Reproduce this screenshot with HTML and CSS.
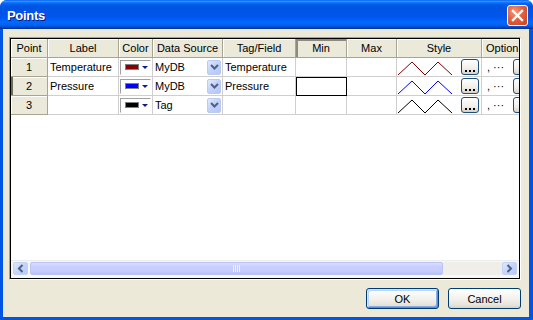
FILE: index.html
```html
<!DOCTYPE html>
<html>

<head>
    <meta charset="utf-8">
    <title>Points</title>
    <link rel="stylesheet" href="styles.css">
</head>

<body>
    <div class="window">
        <div class="titlebar">
            <span class="title">Points</span>
            <span class="close">
                <svg width="19" height="19" viewBox="0 0 19 19">
                    <path d="M5 5 L14 14 M14 5 L5 14" stroke="#fff" stroke-width="2.4" stroke-linecap="square" />
                </svg>
            </span>
        </div>

        <div class="client">
            <div class="grid-frame">
                <div class="grid-inner">
                    <div class="grid-view">
                        <div class="grid">
                            <!-- header row -->
                            <div class="hd">Point</div>
                            <div class="hd">Label</div>
                            <div class="hd">Color</div>
                            <div class="hd">Data Source</div>
                            <div class="hd">Tag/Field</div>
                            <div class="hd pressed">Min</div>
                            <div class="hd">Max</div>
                            <div class="hd">Style</div>
                            <div class="hd left">Option</div>

                            <!-- row 1 -->
                            <div class="hd">1</div>
                            <div class="cell">Temperature</div>
                            <div class="cell c-color">
                                <span class="swatch-box"><span class="swatch sw-red"></span><svg width="6" height="3" viewBox="0 0 6 3"><path d="M0 0 H6 L3 3 Z" fill="#0a1f8c" /></svg></span>
                            </div>
                            <div class="cell">MyDB<span class="combo-btn"><svg width="9" height="6" viewBox="0 0 9 6"><path d="M1 1 L4.5 4.5 L8 1" stroke="#4d6185" stroke-width="2" fill="none" /></svg></span></div>
                            <div class="cell">Temperature</div>
                            <div class="cell"></div>
                            <div class="cell"></div>
                            <div class="cell c-style">
                                <svg width="56" height="19" viewBox="0 0 56 19"><polyline points="0,17 14,4 27,17 40,4 54,17" fill="none" stroke="#800000" stroke-width="1" /></svg>
                                <span class="dots-btn"><svg width="10" height="2" viewBox="0 0 10 2"><path d="M0 0h2v2h-2z M4 0h2v2h-2z M8 0h2v2h-2z" fill="#000" /></svg></span>
                            </div>
                            <div class="cell c-opt">, ···<span class="dots-btn"></span></div>

                            <!-- row 2 -->
                            <div class="hd pressed-row">2</div>
                            <div class="cell">Pressure</div>
                            <div class="cell c-color">
                                <span class="swatch-box"><span class="swatch sw-blue"></span><svg width="6" height="3" viewBox="0 0 6 3"><path d="M0 0 H6 L3 3 Z" fill="#0a1f8c" /></svg></span>
                            </div>
                            <div class="cell">MyDB<span class="combo-btn"><svg width="9" height="6" viewBox="0 0 9 6"><path d="M1 1 L4.5 4.5 L8 1" stroke="#4d6185" stroke-width="2" fill="none" /></svg></span></div>
                            <div class="cell">Pressure</div>
                            <div class="cell focus"></div>
                            <div class="cell"></div>
                            <div class="cell c-style">
                                <svg width="56" height="19" viewBox="0 0 56 19"><polyline points="0,17 14,4 27,17 40,4 54,17" fill="none" stroke="#0000ff" stroke-width="1" /></svg>
                                <span class="dots-btn"><svg width="10" height="2" viewBox="0 0 10 2"><path d="M0 0h2v2h-2z M4 0h2v2h-2z M8 0h2v2h-2z" fill="#000" /></svg></span>
                            </div>
                            <div class="cell c-opt">, ···<span class="dots-btn"></span></div>

                            <!-- row 3 -->
                            <div class="hd">3</div>
                            <div class="cell"></div>
                            <div class="cell c-color">
                                <span class="swatch-box"><span class="swatch sw-black"></span><svg width="6" height="3" viewBox="0 0 6 3"><path d="M0 0 H6 L3 3 Z" fill="#0a1f8c" /></svg></span>
                            </div>
                            <div class="cell">Tag<span class="combo-btn"><svg width="9" height="6" viewBox="0 0 9 6"><path d="M1 1 L4.5 4.5 L8 1" stroke="#4d6185" stroke-width="2" fill="none" /></svg></span></div>
                            <div class="cell"></div>
                            <div class="cell"></div>
                            <div class="cell"></div>
                            <div class="cell c-style">
                                <svg width="56" height="19" viewBox="0 0 56 19"><polyline points="0,17 14,4 27,17 40,4 54,17" fill="none" stroke="#000" stroke-width="1" /></svg>
                                <span class="dots-btn"><svg width="10" height="2" viewBox="0 0 10 2"><path d="M0 0h2v2h-2z M4 0h2v2h-2z M8 0h2v2h-2z" fill="#000" /></svg></span>
                            </div>
                            <div class="cell c-opt">, ···<span class="dots-btn"></span></div>
                        </div>
                    </div>

                    <div class="hscroll">
                        <span class="sb-btn"><svg width="7" height="9" viewBox="0 0 7 9"><path d="M5.5 1 L2 4.5 L5.5 8" stroke="#4d6185" stroke-width="2" fill="none" /></svg></span>
                        <span class="sb-thumb"><span class="grip"></span></span>
                        <span class="sb-track"></span>
                        <span class="sb-btn"><svg width="7" height="9" viewBox="0 0 7 9"><path d="M1.5 1 L5 4.5 L1.5 8" stroke="#4d6185" stroke-width="2" fill="none" /></svg></span>
                    </div>
                </div>
            </div>

            <div class="actions">
                <button class="btn default">OK</button>
                <button class="btn">Cancel</button>
            </div>
        </div>
    </div>
</body>

</html>
```

FILE: styles.css
```css
* {
    box-sizing: border-box;
}

body {
    margin: 0;
    background: #fff;
    font-family: "Liberation Sans", Arial, sans-serif;
    font-size: 11px;
    color: #000;
}

.window {
    width: 533px;
    height: 320px;
    display: flex;
    flex-direction: column;
    background: #0055e5;
    border-radius: 7px 7px 0 0;
    overflow: hidden;
}

.titlebar {
    height: 29px;
    flex: none;
    display: flex;
    align-items: center;
    justify-content: space-between;
    padding: 2px 5px 0 7px;
    background: linear-gradient(to bottom, #0058ee 0%, #3593ff 4%, #288eff 6%, #127dff 8%, #036ffc 10%, #0262ee 14%, #0057e5 20%, #0054e3 24%, #0055eb 56%, #005bf5 66%, #026afe 76%, #0062ef 86%, #0052d6 92%, #0040ab 96%, #003092 100%);
}

.title {
    color: #fff;
    font-weight: bold;
    font-size: 13px;
    letter-spacing: -0.3px;
    text-shadow: 1px 1px #0a1883;
}

.close {
    width: 21px;
    height: 21px;
    border: 1px solid #fff;
    border-radius: 3px;
    display: flex;
    align-items: center;
    justify-content: center;
    background: radial-gradient(circle at 35% 30%, #f29a7d 0%, #e2613f 45%, #c7401f 100%);
}

.client {
    flex: 1;
    margin: 0 4px 3px 3px;
    background: #ece9d8;
    padding: 8px 8px 8px 6px;
    display: flex;
    flex-direction: column;
}

.grid-frame {
    height: 243px;
    border: 1px solid;
    border-color: #a0a0a0 #fff #fff #a0a0a0;
}

.grid-inner {
    height: 100%;
    border: 1px solid #000;
    background: #fff;
    display: flex;
    flex-direction: column;
}

.grid-view {
    flex: 1;
    overflow: hidden;
}

.grid {
    display: grid;
    grid-template-columns: 37px 71px 34px 70px 73px 51px 50px 85px 60px;
    grid-auto-rows: 19px;
    width: max-content;
}

.hd {
    background: #ebe9d9;
    border-right: 1px solid #a7a492;
    border-bottom: 1px solid #a7a492;
    box-shadow: inset 1px 1px #fff;
    display: flex;
    align-items: center;
    justify-content: center;
    white-space: nowrap;
    overflow: hidden;
}

.hd.left {
    justify-content: flex-start;
    padding-left: 4px;
}

.hd.pressed {
    box-shadow: inset 2px 2px #8e8b7c;
}

.hd.pressed-row {
    box-shadow: inset 2px 0 #6f6c5f, inset 1px 1px #fff;
}

.cell {
    border-right: 1px solid #cfcfcf;
    border-bottom: 1px solid #cfcfcf;
    display: flex;
    align-items: center;
    padding: 0 1px 0 2px;
    white-space: nowrap;
    overflow: hidden;
}

.cell.focus {
    border-color: #000;
    box-shadow: inset 1px 1px #000;
}

.c-color {
    padding: 0 1px;
}

.swatch-box {
    width: 32px;
    height: 15px;
    border: 1px solid;
    border-color: #a0a0a0 #fff #fff #a0a0a0;
    display: flex;
    align-items: center;
    padding-left: 4px;
    gap: 3px;
}

.swatch {
    width: 14px;
    height: 6px;
    border: 1px solid #808080;
}

.sw-red {
    background: #8b0000;
}

.sw-blue {
    background: #0000ff;
}

.sw-black {
    background: #000;
}

.combo-btn {
    width: 14px;
    height: 15px;
    margin-left: auto;
    border: 1px solid #b9cbf3;
    border-radius: 2px;
    background: linear-gradient(135deg, #e3ebff 0%, #c3d3fb 45%, #b3c6f6 100%);
    display: flex;
    align-items: center;
    justify-content: center;
}

.c-style {
    padding: 0 2px 0 1px;
}

.dots-btn {
    width: 18px;
    height: 16px;
    flex: none;
    margin-left: auto;
    border: 1px solid #1c4f7c;
    border-radius: 3px;
    background: linear-gradient(to bottom, #fff 0%, #f1efe8 60%, #d8d3c8 100%);
    display: flex;
    align-items: flex-end;
    justify-content: center;
    padding-bottom: 2px;
}

.c-opt {
    padding-left: 5px;
}

.c-opt .dots-btn {
    margin-left: 9px;
}

.hscroll {
    height: 18px;
    flex: none;
    display: flex;
    padding: 1px 2px 3px 2px;
    background: #f7f7f4;
    border-top: 1px solid #ececec;
}

.sb-btn {
    width: 15px;
    border: 1px solid #c3d2f5;
    border-radius: 2px;
    background: linear-gradient(135deg, #dfe7ff 0%, #c5d4fb 50%, #b7c9f6 100%);
    display: flex;
    align-items: center;
    justify-content: center;
}

.sb-thumb {
    width: 413px;
    margin-left: 2px;
    border: 1px solid #b9c3f5;
    border-radius: 2px;
    background: linear-gradient(to bottom, #dcdfff 0%, #cacfff 30%, #c6ccfb 75%, #b2c2ef 100%);
    display: flex;
    align-items: center;
    justify-content: center;
}

.grip {
    width: 7px;
    height: 7px;
    background: repeating-linear-gradient(to right, #eef0ff 0 1px, transparent 1px 2px);
}

.sb-track {
    flex: 1;
    background: #efeee8;
}

.actions {
    margin-top: 8px;
    display: flex;
    justify-content: flex-end;
    gap: 9px;
}

.btn {
    width: 73px;
    height: 21px;
    border: 1px solid #003c74;
    border-radius: 3px;
    background: linear-gradient(to bottom, #fff 0%, #f3f2ec 50%, #e6e3da 85%, #d6d0c5 100%);
    font-family: "Liberation Sans", Arial, sans-serif;
    font-size: 11px;
    color: #000;
    padding: 0;
}

.btn.default {
    box-shadow: inset 1px 1px #cee7ff, inset -1px -1px #6982ee, inset 2px 2px #bcd4f6, inset -2px -2px #89ade4;
}
```
